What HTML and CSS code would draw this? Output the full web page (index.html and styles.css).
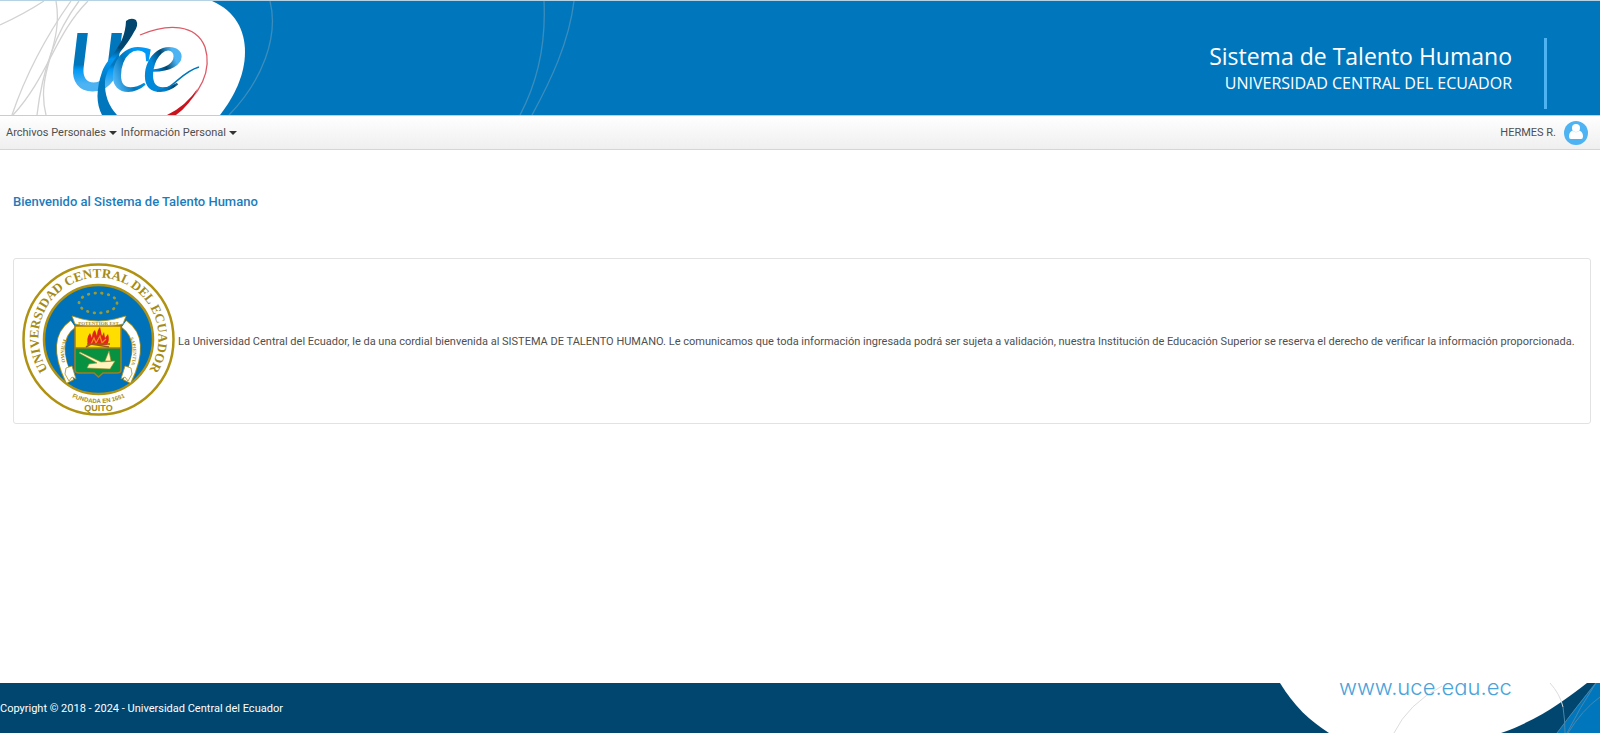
FILE: index.html
```html
<!DOCTYPE html>
<html lang="es">
<head>
    <meta charset="UTF-8">
    <meta name="viewport" content="width=device-width, initial-scale=1.0">
    <title>Sistema de Talento Humano</title>
    <link rel="stylesheet" href="styles.css">
</head>
<body>

    <!-- Cabecera -->
    <header class="header">
        <svg class="header-logo" viewBox="0 0 600 114" width="600" height="114" role="img" aria-label="Uce">
            <defs>
                <linearGradient id="gradU" x1="0" y1="0" x2="0" y2="1">
                    <stop offset="0.55" stop-color="#0077bd"/>
                    <stop offset="0.6" stop-color="#0099f7"/>
                    <stop offset="0.75" stop-color="#4db3f2"/>
                </linearGradient>
                <linearGradient id="gradC" x1="1" y1="0" x2="0" y2="1">
                    <stop offset="0.4" stop-color="#0099f7"/>
                    <stop offset="0.6" stop-color="#0077bd"/>
                    <stop offset="0.8" stop-color="#4db3f2"/>
                </linearGradient>
                <linearGradient id="gradE" x1="1" y1="0" x2="0" y2="1">
                    <stop offset="0.35" stop-color="#4db3f2"/>
                    <stop offset="0.5" stop-color="#00466f"/>
                    <stop offset="0.65" stop-color="#0088da"/>
                </linearGradient>
                <linearGradient id="gradTail" x1="0" y1="0" x2="0" y2="1">
                    <stop offset="0.3" stop-color="#00466f"/>
                    <stop offset="0.42" stop-color="#0099f7"/>
                    <stop offset="0.65" stop-color="#0077bd"/>
                </linearGradient>
            </defs>
            <path fill="#fff" d="M0 0H212C235 10 245 29 245 51C245 74 234 96 220 114H0Z"/>
            <g fill="none" stroke="#d2d2d2" stroke-width="1.3">
                <path d="M0 24Q24 13 44 0"/>
                <path d="M71 0C47 34 27 70 12 114"/>
                <path d="M79 0C55 32 42 70 37 114"/>
                <path d="M88 0C55 33 48 76 13 114"/>
                <path d="M56 0C64 45 35 70 46 114"/>
            </g>
            <g fill="none" stroke="#3c8dbc" stroke-width="1.3">
                <path d="M270 0C279 36 262 80 229 114"/>
                <path d="M544 0C546 42 537 82 520 114"/>
                <path d="M574 0C569 42 550 81 532 114"/>
            </g>
            <path fill="none" stroke="#dc5a66" stroke-width="1.3" d="M140 34C168 22 196 23 205 46C212 68 202 94 174 112"/>
            <path fill="#c91420" d="M167 114Q186 105 198 87Q190 104 176 114Z"/>
            <g class="header-word">
                <text class="header-word-u" x="68" y="90" fill="url(#gradU)">U</text>
                <text x="110" y="90" fill="url(#gradC)">c</text>
                <text x="142" y="90" fill="url(#gradE)">e</text>
            </g>
            <path fill="url(#gradTail)" d="M126 20Q131 16 136 19Q139 24 134 31C124 50 108 61 105 80Q104 100 117 114H102Q93 97 102 71C108 55 125 46 126 20Z"/>
            <path fill="none" stroke="#0077bd" stroke-width="1.500" d="M157 90C174 89 179 72 199 66"/>
        </svg>
        <div class="header-title">
            <h1>Sistema de Talento Humano</h1>
            <h2>UNIVERSIDAD CENTRAL DEL ECUADOR</h2>
        </div>
    </header>

    <!-- Menú -->
    <nav class="menu">
        <button type="button" class="menu-item">Archivos Personales <span class="caret"></span></button>
        <button type="button" class="menu-item">Información Personal <span class="caret"></span></button>
        <button type="button" class="menu-item menu-user">HERMES R.
            <svg viewBox="0 0 24 24" width="24" height="24" aria-hidden="true">
                <circle cx="12" cy="12" r="12" fill="#4db3f2"/>
                <circle cx="12" cy="7" r="4" fill="#fff"/>
                <path fill="#fff" d="M8.500 9.500Q12 13 15.500 9.500Q19 11 19 15.500Q19 18 17 18H7Q5 18 5 15.500Q5 11 8.500 9.500Z"/>
            </svg>
        </button>
    </nav>

    <!-- Contenido -->
    <main class="content">
        <h3>Bienvenido al Sistema de Talento Humano</h3>
        <div class="panel">
            <svg class="seal" viewBox="0 0 153 153" width="153" height="153" role="img" aria-label="Escudo de la Universidad Central del Ecuador">
                <defs>
                    <path id="arcTop" d="M34 117A60 60 0 1 1 119 117"/>
                    <path id="arcBottom" d="M44 131A63 63 0 0 0 109 131"/>
                    <path id="arcLeft" d="M47 109Q36 88 50 68"/>
                    <path id="arcRight" d="M104 68Q117 88 106 109"/>
                </defs>
                <circle cx="76.500" cy="76.500" r="75" fill="#fff" stroke="#b09213" stroke-width="2.500"/>
                <circle cx="76.500" cy="76.500" r="54.500" fill="#0072ba" stroke="#b09213" stroke-width="2.500"/>
                <text class="seal-name"><textPath href="#arcTop" startOffset="50%">UNIVERSIDAD CENTRAL DEL ECUADOR</textPath></text>
                <text class="seal-founded"><textPath href="#arcBottom" startOffset="50%">FUNDADA EN 1651</textPath></text>
                <text class="seal-city" x="76.500" y="148">QUITO</text>
                <ellipse cx="76" cy="40" rx="19" ry="10" fill="none" stroke="#9d9a32" stroke-width="2.800" stroke-linecap="round" stroke-dasharray="0.500 6.150"/>
                <g fill="none" stroke-linecap="butt">
                    <path stroke="#b09213" stroke-width="9" d="M51 61Q28 77 48 119M102 61Q125 77 105 119"/>
                    <path stroke="#fff" stroke-width="7.500" d="M51 61Q28 77 48 118M102 61Q125 77 105 118"/>
                </g>
                <path fill="#fff" stroke="#b09213" stroke-width="0.800" d="M50 53L60 56Q76 60 93 56L104 53L101 61Q76 68 53 61ZM44 105L50 103L54 116L50 114L47 118L43 111ZM109 105L103 103L99 116L103 114L106 118L110 111Z"/>
                <text class="seal-motto" x="76.500" y="62">POTENTIOR EST</text>
                <text class="seal-motto"><textPath href="#arcLeft" startOffset="50%">OMNIUM</textPath></text>
                <text class="seal-motto"><textPath href="#arcRight" startOffset="50%">SAPIENTIA</textPath></text>
                <path fill="#ffde00" d="M53 63H99V85H53Z"/>
                <path fill="#079241" d="M53 85H99V107Q99 110 95 110H81L76.500 114L72 110H57Q53 110 53 107Z"/>
                <path fill="none" stroke="#a77b1b" stroke-width="1.500" d="M53 63H99V107Q99 110 95 110H81L76.500 114L72 110H57Q53 110 53 107ZM53 85H99"/>
                <path fill="#df241c" d="M66 82Q64 75 68 70L70 75Q70 69 73 67L75 73Q75 67 78 64L80 73L82 69L83 75L86 71Q88 77 85 82Z"/>
                <path fill="none" stroke="#f79118" stroke-width="1.200" d="M69 81L72 75L74 80L78 73L80 80L84 76"/>
                <path fill="none" stroke="#9f5a1a" stroke-width="1.500" d="M64 84L69 81L87 84M65 81L88 81"/>
                <path fill="#fff4c0" stroke="#a48920" stroke-width="0.600" d="M58 89L79 99L93 98L88 106L65 105L67 101L75 100L57 90ZM83 98L87 88L89 98Z"/>
            </svg>
            <p>La Universidad Central del Ecuador, le da una cordial bienvenida al SISTEMA DE TALENTO HUMANO. Le comunicamos que toda información ingresada podrá ser sujeta a validación, nuestra Institución de Educación Superior se reserva el derecho de verificar la información proporcionada.</p>
        </div>
    </main>

    <!-- Pie de página -->
    <footer class="footer">
        <span>Copyright © 2018 - 2024 - Universidad Central del Ecuador</span>
        <svg viewBox="0 0 320 50" width="320" height="50">
            <path fill="#fff" d="M0 0C14 23 30 38 49 50H221C258 37 284 18 307 0Z"/>
            <path fill="#0077bd" d="M320 0H315Q296 24 277 50H320Z"/>
            <g fill="none" stroke="#dcdcdc" stroke-width="1">
                <path d="M114 50Q128 21 162 3"/>
                <path d="M270 0Q280 11 283 24"/>
            </g>
            <g fill="none" stroke="#4a86aa" stroke-width="1">
                <path d="M283 24Q285 37 285 50M316 0Q298 22 277 50M316 0Q300 24 287 50M320 14Q302 27 288 50"/>
            </g>
            <text class="footer-site" x="59" y="12">www.uce.edu.ec</text>
        </svg>
    </footer>

</body>
</html>
```
FILE: styles.css
```css
* { box-sizing: border-box; }
body { margin: 0; padding-bottom: 13px; min-height: 100vh; display: flex; flex-direction: column; font-family: "Segoe UI", Roboto, sans-serif; font-size: 11px; color: #4f4f4f; background: #fff; }
h1, h2, h3, p { margin: 0; font-weight: normal; }

/* Cabecera */
.header { display: flex; justify-content: space-between; align-items: flex-start; background: #0077bd; border-top: 1px solid #b4d2e4; color: #fff; }
.header-logo { display: block; flex: none; }
.header-word { font-family: "Liberation Serif", serif; font-style: italic; font-size: 94px; }
.header-word-u { font-family: Lato, sans-serif; font-weight: bold; font-size: 80px; }
.header-title { margin: 37px 53px 0 0; padding-right: 32px; height: 71px; border-right: 3px solid #4db3f2; font-family: "Segoe UI", "Open Sans", "Noto Sans", sans-serif; text-align: right; }
.header-title h1 { font-size: 23px; line-height: 36px; }
.header-title h2 { font-size: 16px; line-height: 18px; }

/* Menú */
.menu { display: flex; align-items: center; gap: 4px; height: 35px; padding: 0 12px 0 6px; background: linear-gradient(#fff, #efefef); border-top: 1px solid #ccc; border-bottom: 1px solid #d5d5d5; }
.menu-item { display: flex; align-items: center; gap: 3px; padding: 0; border: none; background: none; font: inherit; color: inherit; cursor: pointer; }
.menu-user { margin-left: auto; gap: 8px; }
.caret { border: 4px solid transparent; border-top-color: #333; border-bottom: none; }

/* Contenido */
.content { flex: 1; padding: 42px 9px 24px 13px; }
.content h3 { font-size: 13px; line-height: 20px; font-weight: 500; color: #1c7cbd; }
.panel { display: flex; align-items: center; gap: 3px; margin-top: 46px; padding: 4px 8px 7px; border: 1px solid #e2e2e2; border-radius: 3px; }
.panel p { padding-top: 4px; }
.seal { flex: none; }
.seal text { font-family: "Liberation Serif", serif; font-weight: bold; text-anchor: middle; fill: #a58a14; }
.seal .seal-name { font-size: 13px; }
.seal .seal-founded { font-family: "Liberation Sans", sans-serif; font-size: 6px; }
.seal .seal-city { font-family: "Liberation Sans", sans-serif; font-size: 9px; }
.seal .seal-motto { font-size: 5px; }

/* Pie de página */
.footer { display: flex; justify-content: space-between; align-items: center; background: #00466f; color: #fff; }
.footer svg { display: block; overflow: hidden; }
.footer-site { font-family: Inter, sans-serif; font-weight: 300; font-size: 22px; fill: #4aa3da; }
```
